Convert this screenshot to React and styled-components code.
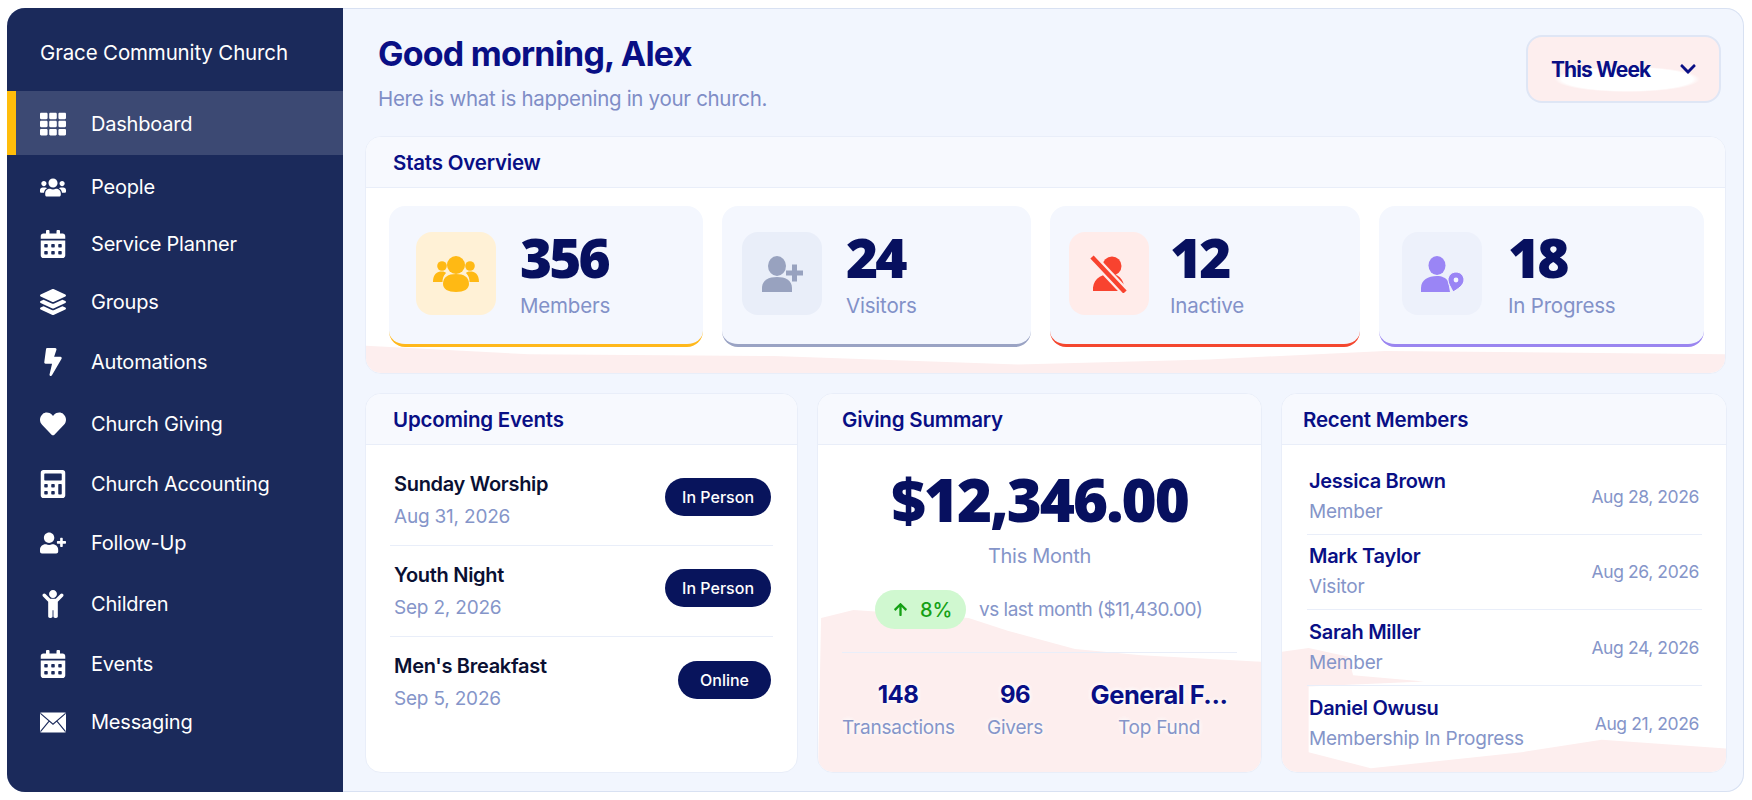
import React from 'react'
import styled, { createGlobalStyle } from 'styled-components'
import {
  FaTh, FaUsers, FaCalendarAlt, FaLayerGroup, FaBolt, FaHeart, FaCalculator,
  FaUserPlus, FaChild, FaChevronDown, FaArrowUp,
} from 'react-icons/fa'

const GlobalStyle = createGlobalStyle`
  html, body {
    margin: 0;
    background: #fff;
    font-family: Inter, "Noto Sans", sans-serif;
  }
  * { box-sizing: border-box; }
`

function EnvelopeIcon() {
  return (
    <svg width="30" height="23" viewBox="0 0 30 23">
      <rect x="0" y="0" width="30" height="23" rx="1.5" fill="#fff" />
      <path d="M0.5 1 L15 13.5 L29.5 1 M0.5 22 L10.5 10 M29.5 22 L19.5 10" fill="none" stroke="#1b2a5b" strokeWidth="1.3" />
    </svg>
  )
}

function MembersIcon() {
  return (
    <svg width="46" height="36" viewBox="0 0 46 36" fill="#ffb914">
      <circle cx="9" cy="10" r="4.8" />
      <circle cx="37" cy="10" r="4.8" />
      <path d="M0 26 C0 18 4 15.5 9 15.5 C11 15.5 12 16 13 17 C10 20 9.5 23 9.5 26 Z" />
      <path d="M46 26 C46 18 42 15.5 37 15.5 C35 15.5 34 16 33 17 C36 20 36.5 23 36.5 26 Z" />
      <circle cx="23" cy="9" r="9" />
      <path d="M10 28 C10 21 15 18 23 18 C31 18 36 21 36 28 C36 33 31 36 23 36 C15 36 10 33 10 28 Z" />
    </svg>
  )
}

function VisitorIcon() {
  return (
    <svg width="42" height="36" viewBox="0 0 42 36" fill="#98a2bf">
      <ellipse cx="16" cy="10" rx="9" ry="10" />
      <path d="M1 36 V32 C1 24 8 21 16 21 C24 21 31 24 31 32 V36 Z" />
      <path d="M31 8.5 H36 V14.5 H42 V19.5 H36 V25.5 H31 V19.5 H25 V14.5 H31 Z" />
    </svg>
  )
}

function InactiveIcon() {
  return (
    <svg width="40" height="38" viewBox="0 0 40 38" fill="#f8432f">
      <circle cx="23" cy="11" r="9.5" />
      <path d="M4 36 C3 26 10 19 22 19 C32 19 36 28 35 36 Z" />
      <path d="M3 2 L36 37" stroke="#ffecea" strokeWidth="9" />
      <path d="M3 2 L36 37" stroke="#f8432f" strokeWidth="4.5" />
    </svg>
  )
}

function ProgressIcon() {
  return (
    <svg width="44" height="36" viewBox="0 0 44 36" fill="#9a85f5">
      <ellipse cx="17" cy="9.5" rx="8.5" ry="9.5" />
      <path d="M1 36 V32 C1 24 8 20 17 20 C22 20 26 22 28 25 L30 36 Z" />
      <path d="M36 16 C41 16 44 20 44 24 C44 29 38 33 33 36 C31 31 28 28 28 24 C28 20 31 16 36 16 Z" stroke="#f4f7fe" strokeWidth="1" />
      <circle cx="36" cy="24" r="2.4" fill="#f4f7fe" />
    </svg>
  )
}

const navItems = [
  { label: 'Dashboard', height: 64, icon: <FaTh size={26} />, active: true },
  { label: 'People', height: 62, icon: <FaUsers size={27} /> },
  { label: 'Service Planner', height: 52, icon: <FaCalendarAlt size={28} /> },
  { label: 'Groups', height: 64, icon: <FaLayerGroup size={28} /> },
  { label: 'Automations', height: 56, icon: <FaBolt size={28} /> },
  { label: 'Church Giving', height: 68, icon: <FaHeart size={28} /> },
  { label: 'Church Accounting', height: 52, icon: <FaCalculator size={28} /> },
  { label: 'Follow-Up', height: 66, icon: <FaUserPlus size={32} /> },
  { label: 'Children', height: 56, icon: <FaChild size={28} /> },
  { label: 'Events', height: 64, icon: <FaCalendarAlt size={28} /> },
  { label: 'Messaging', height: 52, icon: <EnvelopeIcon /> },
]

const stats = [
  { value: '356', label: 'Members', accent: '#ffb81c', tile: '#fff1d6', pad: 27, gap: 24, icon: <MembersIcon /> },
  { value: '24', label: 'Visitors', accent: '#9aa3c4', tile: '#e9eef9', pad: 20, gap: 24, icon: <VisitorIcon /> },
  { value: '12', label: 'Inactive', accent: '#f4472f', tile: '#ffecea', pad: 19, gap: 21, icon: <InactiveIcon /> },
  { value: '18', label: 'In Progress', accent: '#9a85f0', tile: '#edf1fb', pad: 23, gap: 26, icon: <ProgressIcon /> },
]

const events = [
  { name: 'Sunday Worship', date: 'Aug 31, 2026', kind: 'In Person' },
  { name: 'Youth Night', date: 'Sep 2, 2026', kind: 'In Person' },
  { name: "Men's Breakfast", date: 'Sep 5, 2026', kind: 'Online' },
]

const members = [
  { name: 'Jessica Brown', role: 'Member', date: 'Aug 28, 2026' },
  { name: 'Mark Taylor', role: 'Visitor', date: 'Aug 26, 2026' },
  { name: 'Sarah Miller', role: 'Member', date: 'Aug 24, 2026' },
  { name: 'Daniel Owusu', role: 'Membership In Progress', date: 'Aug 21, 2026' },
]

function App() {
  return (
    <Page>
      <GlobalStyle />
      <Frame>
        <Sidebar>
          <Brand>Grace Community Church</Brand>
          <nav>
            {navItems.map((item) => (
              <NavItem key={item.label} $active={item.active} $height={item.height}>
                <NavIcon>{item.icon}</NavIcon>
                {item.label}
              </NavItem>
            ))}
          </nav>
        </Sidebar>

        <Main>
          <Header>
            <div>
              <Greeting>Good morning, Alex</Greeting>
              <Subtitle>Here is what is happening in your church.</Subtitle>
            </div>
            <RangeButton>
              This Week
              <FaChevronDown size={18} />
            </RangeButton>
          </Header>

          <Panel>
            <Blotch $height={34} $shape="0 20%, 12% 45%, 30% 50%, 48% 75%, 62% 60%, 75% 35%, 100% 45%, 100% 100%, 0 100%" />
            <PanelHeader>
              <PanelTitle>Stats Overview</PanelTitle>
            </PanelHeader>
            <StatsGrid>
              {stats.map((stat) => (
                <StatCard key={stat.label} $accent={stat.accent} $pad={stat.pad} $gap={stat.gap}>
                  <StatTile $bg={stat.tile}>{stat.icon}</StatTile>
                  <div>
                    <StatValue>{stat.value}</StatValue>
                    <StatLabel>{stat.label}</StatLabel>
                  </div>
                </StatCard>
              ))}
            </StatsGrid>
          </Panel>

          <Columns>
            <Panel>
              <PanelHeader>
                <PanelTitle>Upcoming Events</PanelTitle>
              </PanelHeader>
              <EventList>
                {events.map((event) => (
                  <EventRow key={event.name}>
                    <div>
                      <EventName>{event.name}</EventName>
                      <MutedLine $gap={5}>{event.date}</MutedLine>
                    </div>
                    <KindPill>{event.kind}</KindPill>
                  </EventRow>
                ))}
              </EventList>
            </Panel>

            <Panel>
              <Blotch $height={162} $shape="0.7% 5%, 8% 0, 13% 1%, 34% 5%, 43% 13%, 58% 24%, 73% 28%, 100% 32%, 100% 100%, 0 100%" />
              <PanelHeader>
                <PanelTitle $indent={24}>Giving Summary</PanelTitle>
              </PanelHeader>
              <GivingBody>
                <Amount>$12,346.00</Amount>
                <AmountCaption>This Month</AmountCaption>
                <TrendRow>
                  <TrendPill><FaArrowUp size={15} />8%</TrendPill>
                  <TrendText>vs last month ($11,430.00)</TrendText>
                </TrendRow>
                <GivingStats>
                  <GivingStat>
                    <GivingValue>148</GivingValue>
                    <GivingLabel>Transactions</GivingLabel>
                  </GivingStat>
                  <GivingStat>
                    <GivingValue>96</GivingValue>
                    <GivingLabel>Givers</GivingLabel>
                  </GivingStat>
                  <GivingStat>
                    <GivingValue $wide>General F...</GivingValue>
                    <GivingLabel>Top Fund</GivingLabel>
                  </GivingStat>
                </GivingStats>
              </GivingBody>
            </Panel>

            <Panel>
              <Blotch $height={124} $shape="0 3%, 6% 0, 15% 7%, 16% 22%, 32% 27%, 6% 31%, 6% 84%, 20% 97%, 54% 84%, 72% 74%, 100% 81%, 100% 100%, 0 100%" />
              <PanelHeader>
                <PanelTitle $indent={21}>Recent Members</PanelTitle>
              </PanelHeader>
              <MemberList>
                {members.map((member) => (
                  <MemberRow key={member.name}>
                    <div>
                      <MemberName>{member.name}</MemberName>
                      <MutedLine $gap={3}>{member.role}</MutedLine>
                    </div>
                    <MemberDate>{member.date}</MemberDate>
                  </MemberRow>
                ))}
              </MemberList>
            </Panel>
          </Columns>
        </Main>
      </Frame>
    </Page>
  )
}

const Page = styled.div`
  width: 1752px;
  height: 800px;
  padding: 8px 8px 8px 7px;
  overflow: hidden;
`

const Frame = styled.div`
  display: flex;
  height: 784px;
  border-radius: 18px;
  overflow: hidden;
  background: #f2f6fe;
  box-shadow: inset 0 0 0 1px #d8e1f2;
`

const Sidebar = styled.aside`
  width: 336px;
  flex-shrink: 0;
  background: #1b2a5b;
  color: #fff;
`

const Brand = styled.div`
  height: 83px;
  padding: 30px 0 0 33px;
  font-size: 20.5px;
  line-height: 30px;
  letter-spacing: -0.15px;
`

const NavItem = styled.div`
  display: flex;
  align-items: center;
  height: ${(p) => p.$height}px;
  padding-top: 2px;
  padding-left: ${(p) => (p.$active ? '24px' : '33px')};
  border-left: ${(p) => (p.$active ? '9px solid #ffbd0a' : 'none')};
  background: ${(p) => (p.$active ? 'rgba(255, 255, 255, 0.15)' : 'transparent')};
  font-size: 20px;
  letter-spacing: -0.2px;
`

const NavIcon = styled.span`
  display: flex;
  justify-content: center;
  width: 26px;
  margin-right: 25px;
`

const Main = styled.main`
  flex: 1;
  min-width: 0;
  padding: 0 18px 0 22px;
`

const Header = styled.header`
  display: flex;
  justify-content: space-between;
  align-items: flex-start;
  height: 128px;
  padding: 24px 5px 0 13px;
`

const Greeting = styled.h1`
  margin: 0;
  font-size: 34px;
  line-height: 44px;
  font-weight: 700;
  letter-spacing: -0.8px;
  color: #090f85;
`

const Subtitle = styled.p`
  margin: 8px 0 0;
  font-size: 20.5px;
  line-height: 29px;
  letter-spacing: -0.3px;
  color: #7f8dc6;
`

const RangeButton = styled.button`
  display: flex;
  justify-content: space-between;
  align-items: center;
  width: 195px;
  height: 68px;
  margin-top: 3px;
  padding: 0 22px 0 23px;
  border: 2px solid #dfe6f5;
  border-radius: 16px;
  background: radial-gradient(ellipse 38% 20% at 52% 66%, #fff 90%, transparent), #fdeeee;
  font-family: inherit;
  font-size: 21px;
  font-weight: 700;
  letter-spacing: -0.9px;
  color: #090f85;
`

const Panel = styled.section`
  position: relative;
  overflow: hidden;
  background: #fff;
  border: 1px solid #e9eef9;
  border-radius: 16px;
`

/* the washed out pink patches sit behind the panel content */
const Blotch = styled.div`
  position: absolute;
  left: 0;
  right: 0;
  bottom: 0;
  height: ${(p) => p.$height}px;
  background: #fdeeee;
  clip-path: polygon(${(p) => p.$shape});
`

const PanelHeader = styled.div`
  position: relative;
  height: 51px;
  background: #f7f9fe;
  border-bottom: 1px solid #e9eef9;
`

const PanelTitle = styled.h2`
  margin: 0;
  padding-left: ${(p) => p.$indent || 27}px;
  font-size: 20.5px;
  line-height: 52px;
  font-weight: 600;
  letter-spacing: -0.2px;
  color: #090f85;
`

const StatsGrid = styled.div`
  position: relative;
  display: grid;
  grid-template-columns: 314px 309px 310px 325px;
  column-gap: 19px;
  height: 185px;
  padding: 18px 0 0 23px;
`

const StatCard = styled.div`
  display: flex;
  gap: ${(p) => p.$gap}px;
  height: 141px;
  padding: 26px 0 0 ${(p) => p.$pad}px;
  background: #f4f7fe;
  border-bottom: 3px solid ${(p) => p.$accent};
  border-radius: 16px;
`

const StatTile = styled.div`
  display: flex;
  align-items: center;
  justify-content: center;
  width: 80px;
  height: 83px;
  border-radius: 16px;
  background: ${(p) => p.$bg};
`

const StatValue = styled.div`
  font-family: "Open Sans", sans-serif;
  font-size: 55px;
  line-height: 50px;
  font-weight: 800;
  letter-spacing: -3px;
  color: #07105f;
`

const StatLabel = styled.div`
  margin-top: 10px;
  font-size: 20.5px;
  line-height: 28px;
  letter-spacing: -0.2px;
  color: #8291c8;
`

const Columns = styled.div`
  display: grid;
  grid-template-columns: 433px 445px 446px;
  column-gap: 19px;
  height: 380px;
  margin-top: 19px;

  & > section {
    height: 380px;
  }
`

const EventList = styled.div`
  padding: 10px 24px 0;
`

const EventRow = styled.div`
  display: flex;
  justify-content: space-between;
  align-items: center;
  height: 91px;
  padding: 0 2px 0 4px;
  border-bottom: 1px solid #e9eef9;

  &:last-child {
    border-bottom: none;
  }
`

const EventName = styled.div`
  font-size: 20px;
  line-height: 28px;
  font-weight: 600;
  letter-spacing: -0.3px;
  color: #0a1033;
`

const MutedLine = styled.div`
  margin-top: ${(p) => p.$gap}px;
  font-size: 19px;
  line-height: 28px;
  letter-spacing: -0.2px;
  color: #8595c9;
`

const KindPill = styled.span`
  min-width: 93px;
  margin-bottom: 6px;
  padding: 0 17px;
  text-align: center;
  font-size: 16px;
  line-height: 38px;
  font-weight: 500;
  border-radius: 19px;
  background: #08145c;
  color: #fff;
`

const GivingBody = styled.div`
  position: relative;
  display: flex;
  flex-direction: column;
  align-items: center;
  padding-top: 20px;
`

const Amount = styled.div`
  font-family: "Open Sans", sans-serif;
  font-size: 60px;
  line-height: 68px;
  font-weight: 800;
  letter-spacing: -2px;
  color: #07105f;
`

const AmountCaption = styled.div`
  margin-top: 9px;
  font-size: 20px;
  line-height: 28px;
  letter-spacing: -0.3px;
  color: #8595c9;
`

const TrendRow = styled.div`
  display: flex;
  align-items: center;
  align-self: flex-start;
  margin: 20px 0 0 57px;
`

const TrendPill = styled.span`
  display: flex;
  align-items: center;
  gap: 12px;
  width: 91px;
  height: 39px;
  padding-left: 18px;
  border-radius: 20px;
  background: #d0f8d0;
  font-size: 20px;
  font-weight: 500;
  color: #15a015;
`

const TrendText = styled.span`
  margin-left: 13px;
  font-size: 19px;
  letter-spacing: -0.5px;
  color: #8595c9;
`

const GivingStats = styled.div`
  display: grid;
  grid-template-columns: 112px 122px 166px;
  align-self: stretch;
  margin: 23px 24px 0;
  padding-top: 25px;
  border-top: 1px solid #e9eef9;
`

const GivingStat = styled.div`
  text-align: center;
  white-space: nowrap;
`

const GivingValue = styled.div`
  font-size: ${(p) => (p.$wide ? '25.5px' : '24px')};
  line-height: 34px;
  font-weight: 700;
  letter-spacing: -0.5px;
  color: #090f85;
  text-shadow: 0 0 5px #fff, 0 0 5px #fff;
`

const GivingLabel = styled.div`
  margin-top: 2px;
  font-size: 19px;
  line-height: 28px;
  letter-spacing: -0.2px;
  color: #8595c9;
  text-shadow: 0 0 5px #fff, 0 0 5px #fff;
`

const MemberList = styled.div`
  position: relative;
  padding: 14px 24px 0 25px;
`

const MemberRow = styled.div`
  display: flex;
  justify-content: space-between;
  align-items: center;
  height: 75.6px;
  padding: 0 3px 0 2px;
  border-bottom: 1px solid #e9eef9;

  &:last-child {
    border-bottom: none;
  }
`

const MemberName = styled.div`
  font-size: 20px;
  line-height: 28px;
  font-weight: 600;
  letter-spacing: -0.3px;
  color: #090f85;
`

const MemberDate = styled.span`
  font-size: 17.5px;
  letter-spacing: -0.4px;
  color: #8595c9;
`

export default App
